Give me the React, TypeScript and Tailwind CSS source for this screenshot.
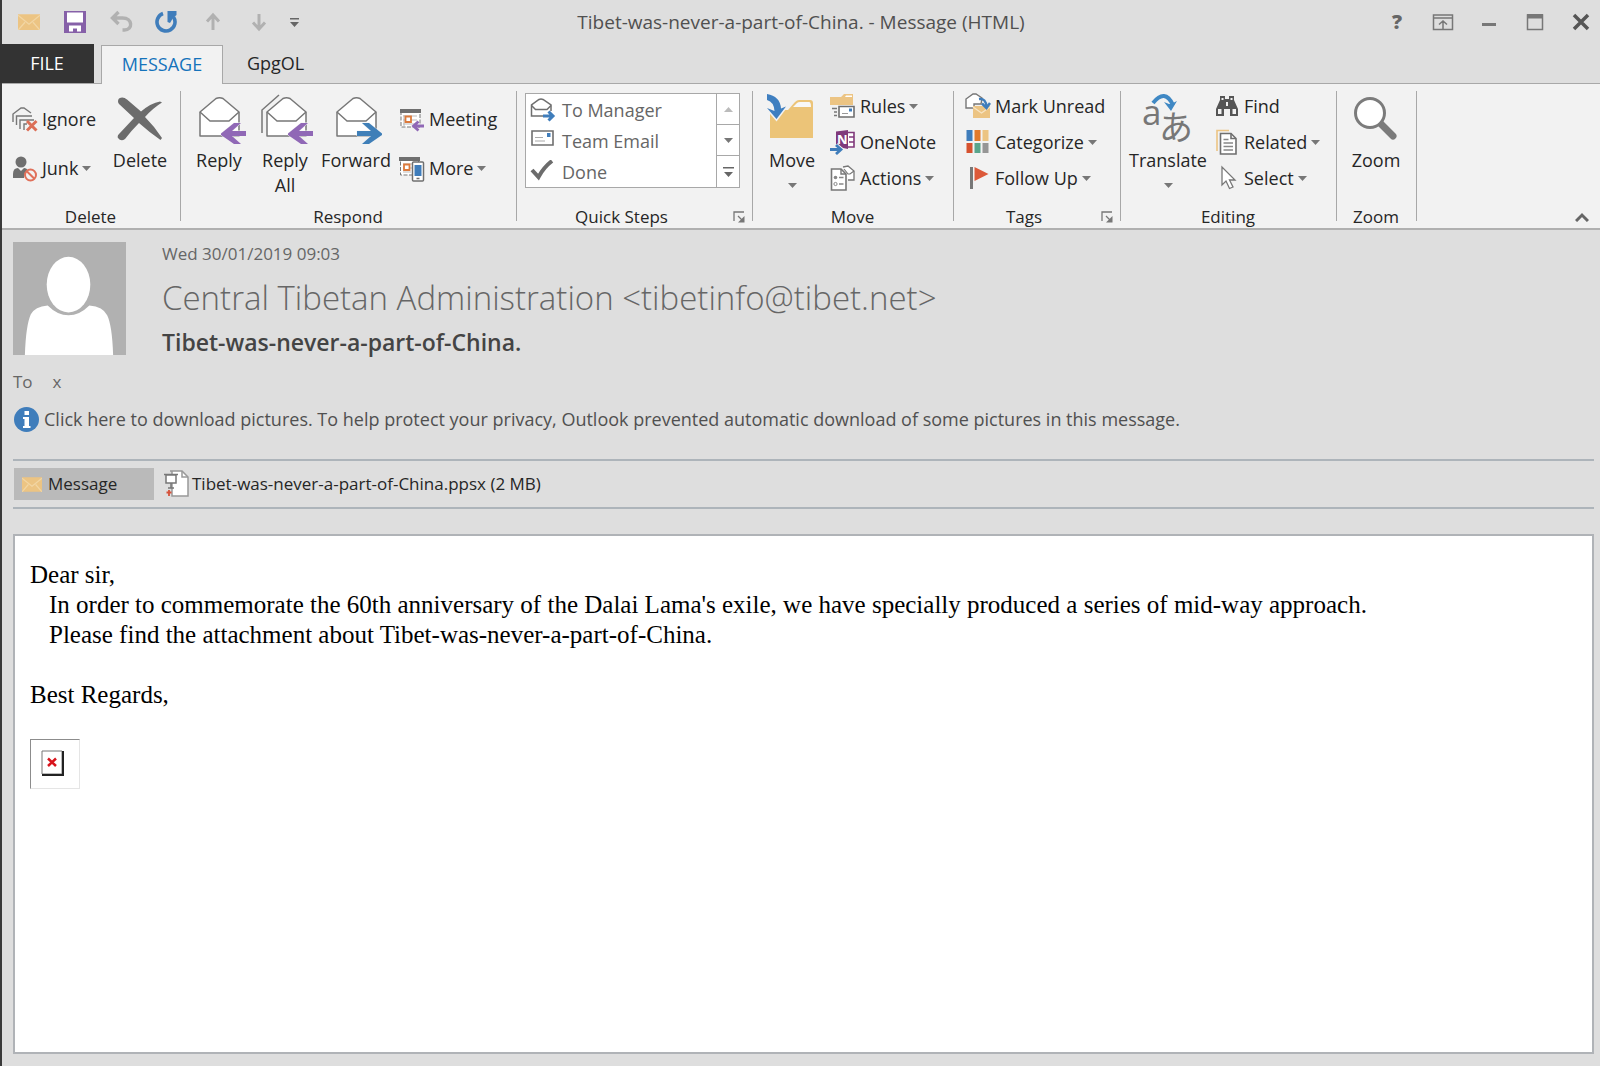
import type { ReactNode } from 'react'

const Caret = () => (
  <svg width="9" height="5" viewBox="0 0 9 5" className="shrink-0"><path d="M0 0h9L4.5 5z" fill="#777" /></svg>
)

const Envelope = ({ x = 0 }: { x?: number }) => (
  <g transform={`translate(${x} 0)`} stroke="#777" strokeWidth="1.5" strokeLinejoin="round">
    <path d="M1 15v24h39V15L24 1.500Q20.500 0 17 1.500z" fill="#fff" />
    <path d="M1 15l10 9h19l10-9" fill="none" />
  </g>
)

const ReplyArrow = () => (
  <path d="M22 36.500L35 26h7l-9 8h14v5H33l9 8h-7L22 38z" fill="#9068b6" stroke="#f2f2f2" strokeWidth="1" paintOrder="stroke" />
)

const MailIcon = ({ size = 22 }: { size?: number }) => (
  <svg width={size} height={size * 0.75} viewBox="0 0 22 16">
    <path d="M0 0h22v16H0z" fill="#ecc483" />
    <path d="M0 1l11 9L22 1M0 16l7-8M22 16l-7-8" fill="none" stroke="#f2d6a4" strokeWidth="1.300" />
  </svg>
)

const quickAccess = [
  { label: 'Mail', icon: <MailIcon /> },
  {
    label: 'Save',
    icon: (
      <svg width="24" height="24" viewBox="0 0 24 24">
        <path d="M1 1h22v22H1z" fill="#8660a8" />
        <path d="M4 2.500h16v10H4zM6 15.500h12v6h-4v-3h-4v3H6z" fill="#fff" />
      </svg>
    )
  },
  {
    label: 'Undo',
    icon: (
      <svg width="24" height="24" viewBox="0 0 24 24" fill="none" stroke="#b1b1b1" strokeWidth="3.400">
        <path d="M9.500 2L3.500 8l6 6M3.500 8h10c10.500 0 10.500 12 2 12h-2" />
      </svg>
    )
  },
  {
    label: 'Redo',
    icon: (
      <svg width="24" height="24" viewBox="0 0 24 24" fill="none" stroke="#3f7dbb" strokeWidth="3.600">
        <path d="M8 3.500A9 9 0 1 0 18.500 7" />
        <path d="M12 1h9.500v4L18 8l-3 5-2.500-1V1z" fill="#3f7dbb" stroke="none" />
      </svg>
    )
  },
  {
    label: 'Previous item',
    icon: (
      <svg width="20" height="20" viewBox="0 0 20 20" fill="none" stroke="#b1b1b1" strokeWidth="3">
        <path d="M10 18V4M4 9.500L10 3l6 6.500" />
      </svg>
    )
  },
  {
    label: 'Next item',
    icon: (
      <svg width="20" height="20" viewBox="0 0 20 20" fill="none" stroke="#b1b1b1" strokeWidth="3">
        <path d="M10 2v14M4 10.500l6 6.500 6-6.500" />
      </svg>
    )
  }
]

const windowButtons = [
  {
    label: 'Ribbon display options',
    icon: (
      <svg width="22" height="18" viewBox="0 0 22 18" fill="none" stroke="#777" strokeWidth="1.500">
        <path d="M1.500 2h19v14.500h-19zM1.500 5h19M11 16V8M7 11.500L11 8l4 3.500" />
      </svg>
    )
  },
  { label: 'Minimize', icon: <svg width="22" height="18" viewBox="0 0 22 18"><path d="M4 10h14v3H4z" fill="#777" /></svg> },
  {
    label: 'Maximize',
    icon: (
      <svg width="22" height="18" viewBox="0 0 22 18">
        <path d="M3.500 2h15v14.500h-15z" fill="none" stroke="#777" strokeWidth="1.500" />
        <path d="M3 1h16v4.500H3z" fill="#777" />
      </svg>
    )
  },
  {
    label: 'Close',
    icon: (
      <svg width="22" height="18" viewBox="0 0 22 18"><path d="M4 2l14 14M18 2L4 16" stroke="#555" strokeWidth="3.500" /></svg>
    )
  }
]

const icons = {
  ignore: (
    <svg width="26" height="26" viewBox="0 0 26 26" fill="none" stroke="#777" strokeWidth="1.400">
      <path d="M1 15V7l8-6 3 0 7 5M4.500 18V9H20M8 22v-9h14" />
      <path d="M12 23v-6h3" />
      <path d="M15 14l9.500 9.500M24.500 14L15 23.500" stroke="#dc6f57" strokeWidth="3" />
    </svg>
  ),
  junk: (
    <svg width="26" height="26" viewBox="0 0 26 26">
      <circle cx="9" cy="6" r="5.500" fill="#6f6f6f" />
      <path d="M1 22v-4q0-6 5-6l3 3 3-3q3 0 4 3-4 2-4 7z" fill="#6f6f6f" />
      <circle cx="18.500" cy="19" r="5.500" fill="#f2f2f2" stroke="#e0705a" strokeWidth="2" />
      <path d="M14.800 15.200l7.600 7.600" stroke="#e0705a" strokeWidth="2" />
    </svg>
  ),
  delete: (
    <svg width="46" height="44" viewBox="0 0 46 44" fill="#6c6c6c">
      <path d="M2 1.500q4-2.500 8 1l14 12Q34 6 43 4.500l2 1Q36 11 28 20 38 30 45 41l-1.500 2Q32 35 22 26 14 34 8 42q-4 3-7-1-1-2 1-4L17 21 2 7q-2-3 0-5.500z" />
    </svg>
  ),
  reply: <svg width="47" height="48" viewBox="0 0 47 48"><Envelope /><ReplyArrow /></svg>,
  replyAll: (
    <svg width="52" height="51" viewBox="0 -3 52 51">
      <path d="M1 36V13L18 -2" fill="none" stroke="#777" strokeWidth="1.500" />
      <Envelope x={5} />
      <g transform="translate(5 0)"><ReplyArrow /></g>
    </svg>
  ),
  forward: (
    <svg width="47" height="48" viewBox="0 0 47 48">
      <Envelope />
      <path d="M46 36.500L33 26h-7l9 8H21v5h14l-9 8h7L46 38z" fill="#3f7fb8" stroke="#f2f2f2" strokeWidth="1" paintOrder="stroke" />
    </svg>
  ),
  meeting: (
    <svg width="26" height="24" viewBox="0 0 26 24">
      <path d="M2 3h19v16H2z" fill="#fff" stroke="#777" strokeDasharray="4 1.500" />
      <path d="M1 1h21v4H1z" fill="#6f6f6f" />
      <path d="M4 8h14M4 12h14M4 16h14M5 7v11" stroke="#bbb" />
      <path d="M6.500 8.500H12V14H6.500z" fill="#fff" stroke="#dc7a3c" strokeWidth="1.800" />
      <path d="M25 18H15M19.500 13.500L14.500 18l5 4.500" fill="none" stroke="#9068b6" strokeWidth="2.800" />
    </svg>
  ),
  more: (
    <svg width="26" height="26" viewBox="0 0 26 26">
      <path d="M1.500 4h18v15h-18z" fill="#fff" stroke="#777" strokeDasharray="4 1.500" />
      <path d="M0 1h21v4H0z" fill="#6f6f6f" />
      <path d="M4 8h10M4 12h10M4 16h8" stroke="#bbb" />
      <path d="M5 8.500h5.500V14H5z" fill="#fff" stroke="#dc7a3c" strokeWidth="1.800" />
      <rect x="13.500" y="6" width="11" height="19" rx="1" fill="#fff" stroke="#6f6f6f" strokeWidth="1.500" />
      <path d="M15.500 9h7v11h-7z" fill="#3f7dbb" />
      <path d="M17.500 22.500h3" stroke="#6f6f6f" strokeWidth="1.500" />
    </svg>
  ),
  toManager: (
    <svg width="26" height="26" viewBox="0 0 26 26">
      <path d="M21 13V7L13 1.500Q11 .5 9 1.500L1.500 7v11H13" fill="none" stroke="#6f6f6f" strokeWidth="1.500" />
      <path d="M1.500 7.500l4 4H17l4-4" fill="none" stroke="#6f6f6f" strokeWidth="1.500" />
      <path d="M13 18h10M18.500 13.500l4.500 4.500-4.500 4.500" fill="none" stroke="#3f7dbb" strokeWidth="3" />
    </svg>
  ),
  teamEmail: (
    <svg width="26" height="26" viewBox="0 0 26 26">
      <path d="M2 2h21v14H2z" fill="#fff" stroke="#6f6f6f" strokeWidth="1.600" />
      <path d="M17 4h3.500v4H17z" fill="#3f7dbb" />
      <path d="M5 8.500h8M5 12h10" stroke="#aaa" strokeWidth="1.200" />
    </svg>
  ),
  done: (
    <svg width="26" height="26" viewBox="0 0 26 26"><path d="M2 10l6.500 7Q14 7 22 1" fill="none" stroke="#6c6c6c" strokeWidth="4" /></svg>
  ),
  move: (
    <svg width="48" height="48" viewBox="0 0 48 48">
      <path d="M4 16h18l7-8q2-2 4-2h11q3 0 3 3v35H4z" fill="#ecc478" />
      <path d="M27 13l4-4q1-1 3-1h9q2 0 2 5z" fill="#f8f8f8" />
      <path d="M1 14l9.500 11L20 12.500l-5 2Q14 2 1 0v6q7 2 7.500 11z" fill="#3f7fc0" stroke="#f2f2f2" strokeWidth="3" paintOrder="stroke" />
    </svg>
  ),
  rules: (
    <svg width="26" height="26" viewBox="0 0 26 26">
      <path d="M0 4h11l3-3h9v11H0z" fill="#ecc483" />
      <path d="M15 4l1-1.500h6V4z" fill="#fff" />
      <path d="M2 15.500h5M4 19h3M4 22.500h3" stroke="#777" strokeWidth="1.500" />
      <path d="M9 13.500h15V24H9z" fill="#fff" stroke="#6f6f6f" strokeWidth="1.600" />
      <path d="M19 15.500h3v3h-3z" fill="#3f7dbb" />
      <path d="M12 20.500h6" stroke="#999" />
    </svg>
  ),
  oneNote: (
    <svg width="26" height="26" viewBox="0 0 26 26">
      <path d="M17 3.500h7V18h-7" fill="#fff" stroke="#80397b" strokeWidth="1.600" />
      <path d="M19 8h5M19 13h5" stroke="#80397b" strokeWidth="1.400" />
      <path d="M6 2.500L18 1v19l-5-1-7-4z" fill="#80397b" />
      <text x="7" y="15" fontSize="13" fontWeight="700" fill="#fff" fontFamily="Open Sans">N</text>
      <path d="M0 20.500h10M6 16l5 4.500L6 25" fill="none" stroke="#f2f2f2" strokeWidth="4.500" />
      <path d="M0 20.500h9M6 16l5 4.500L6 25" fill="none" stroke="#3f7dbb" strokeWidth="2.800" />
    </svg>
  ),
  actions: (
    <svg width="26" height="26" viewBox="0 0 26 26">
      <path d="M13 2l5-1 6 5v9h-6" fill="#fff" stroke="#777" strokeWidth="1.300" />
      <path d="M14 4l4 5h2l4-3" fill="none" stroke="#777" strokeWidth="1.200" />
      <path d="M1.500 4H11l5 5v16H1.500z" fill="#fff" stroke="#777" strokeWidth="1.600" />
      <path d="M11 4v5h5" fill="none" stroke="#777" strokeWidth="1.400" />
      <circle cx="5.500" cy="12.500" r="1.800" fill="#888" />
      <circle cx="5.500" cy="19" r="1.600" fill="none" stroke="#888" />
      <path d="M9 12.500h4.500M9 19h4.500" stroke="#888" strokeWidth="1.300" />
    </svg>
  ),
  markUnread: (
    <svg width="26" height="26" viewBox="0 0 26 26">
      <path d="M1 15V6l7-5h3l6 4-1 6H9v4z" fill="#fff" stroke="#777" strokeWidth="1.400" />
      <path d="M8 13h17v12H8z" fill="#ecc483" />
      <path d="M8 14l8.500 6 8.500-6" fill="none" stroke="#f7e5c5" strokeWidth="1.300" />
      <path d="M14 6q7-1 7.500 8M17 10.500l4.500 4.500 3.500-5" fill="none" stroke="#3f7dbb" strokeWidth="2.500" />
    </svg>
  ),
  categorize: (
    <svg width="26" height="26" viewBox="0 0 26 26">
      <path d="M1.500 1h6v11h-6z" fill="#3f7dbb" />
      <path d="M9.500 1h6v11h-6z" fill="#e27a2b" />
      <path d="M17.500 1h6v11h-6z" fill="#ecc483" />
      <path d="M1.500 14h6v10h-6z" fill="#d6522f" />
      <path d="M9.500 14h6v10h-6z" fill="#5aa58c" />
      <path d="M17.500 14h6v10h-6z" fill="#969696" />
    </svg>
  ),
  followUp: (
    <svg width="26" height="26" viewBox="0 0 26 26">
      <path d="M5 2h3v22H5z" fill="#777" />
      <path d="M9.500 2l14 7-14 7z" fill="#dc5939" />
    </svg>
  ),
  translate: (
    <svg width="50" height="52" viewBox="0 0 50 52" className="overflow-visible">
      <text x="-1" y="31" fontSize="35" fill="#777" fontFamily="Open Sans">a</text>
      <text x="16" y="46" fontSize="34" fill="#777" fontFamily="Noto Sans CJK JP">あ</text>
      <path d="M10 9q12-15 20 2" fill="none" stroke="#3f88c4" strokeWidth="4" />
      <path d="M21 8l7 9 6-10-4 2-4 1z" fill="#3f88c4" />
    </svg>
  ),
  find: (
    <svg width="24" height="24" viewBox="0 0 24 24" fill="#555">
      <path d="M5 2h5v3h4V2h5v4l4 9v7h-8v-7H9v7H1v-7l4-9z" />
      <path d="M3 15h3.500v5H3zM17.500 15H21v5h-3.500zM6.500 4h2v2h-2zM15.500 4h2v2h-2zM11 8h2v4h-2z" fill="#f2f2f2" />
    </svg>
  ),
  related: (
    <svg width="24" height="26" viewBox="0 0 24 26">
      <path d="M14 1.500H2V22" fill="none" stroke="#ecc483" strokeWidth="1.600" />
      <path d="M5.500 4.500H16l5 5V25H5.500z" fill="#fff" stroke="#6f6f6f" strokeWidth="1.600" />
      <path d="M16 4.500v5h5" fill="none" stroke="#6f6f6f" strokeWidth="1.600" />
      <path d="M8.500 10.500h5M8.500 14h9.500M8.500 17.500h9.500M8.500 21h9.500" stroke="#888" strokeWidth="1.300" />
    </svg>
  ),
  select: (
    <svg width="24" height="26" viewBox="0 0 24 26">
      <path d="M7 2v18l4-4 3.500 7.500 3.500-1.500-3.500-7H20z" fill="#fff" stroke="#777" strokeWidth="1.300" />
    </svg>
  ),
  zoom: (
    <svg width="44" height="44" viewBox="0 0 44 44">
      <path d="M28 28l12 12" stroke="#7b7b7b" strokeWidth="7" strokeLinecap="round" />
      <circle cx="17" cy="17" r="14.500" fill="#fff" stroke="#7b7b7b" strokeWidth="3" />
    </svg>
  )
}

interface GroupProps {
  title: string
  className: string
  launcher?: boolean
  children: ReactNode
}

const Group = ({ title, className, launcher, children }: GroupProps) => (
  <>
    <section aria-label={title} className={`relative flex shrink-0 flex-col ${className}`}>
      <div className="flex flex-1 items-start">{children}</div>
      <h2 className={`pb-px text-center text-[17px] leading-5 ${launcher ? 'pr-[26px]' : 'pr-px'}`}>{title}</h2>
      {launcher && (
        <button aria-label={`${title} options`} className="absolute right-[7px] bottom-[5px]">
          <svg width="12" height="12" viewBox="0 0 12 12" fill="none" stroke="#777" strokeWidth="1.300">
            <path d="M1 10V1h10" />
            <path d="M5 5l5 5" />
            <path d="M11.500 5v6.500H5z" fill="#777" stroke="none" />
          </svg>
        </button>
      )}
    </section>
    <div className="my-[7px] w-px shrink-0 bg-[#a8a8a8]" />
  </>
)

const LargeButton = ({ icon, label, className, caret }: { icon: ReactNode; label: string; className: string; caret?: boolean }) => (
  <button className={`flex shrink-0 flex-col items-center pt-[10px] leading-[25px] ${className}`}>
    <span className="flex h-[54px] items-start justify-center">{icon}</span>
    <span>{label}</span>
    {caret && <span className="flex h-6 items-center"><Caret /></span>}
  </button>
)

const SmallButton = ({ icon, label, caret, className = 'h-9 gap-1' }: { icon: ReactNode; label: string; caret?: boolean; className?: string }) => (
  <button className={`flex items-center whitespace-nowrap ${className}`}>
    <span className="flex w-[26px] shrink-0 justify-center">{icon}</span>
    <span>{label}</span>
    {caret && <Caret />}
  </button>
)

const quickSteps = [
  { label: 'To Manager', icon: icons.toManager },
  { label: 'Team Email', icon: icons.teamEmail },
  { label: 'Done', icon: icons.done }
]

const TitleBar = () => (
  <header className="grid h-11 grid-cols-[1fr_auto_1fr] items-center">
    <div className="flex items-center pl-1">
      {quickAccess.map((item) => (
        <button key={item.label} aria-label={item.label} className="flex w-[46px] justify-center">
          {item.icon}
        </button>
      ))}
      <button aria-label="Customize toolbar" className="flex w-6 justify-center">
        <svg width="9" height="9" viewBox="0 0 9 9" fill="#666"><path d="M0 0h9v1.500H0zM0 4h9L4.500 9z" /></svg>
      </button>
    </div>
    <h1 className="text-[19px] text-[#505050]">Tibet-was-never-a-part-of-China. - Message (HTML)</h1>
    <div className="flex items-center justify-end gap-6 pr-2">
      <button aria-label="Help" className="w-[22px] text-[20px] leading-6 font-extrabold text-[#666]">?</button>
      {windowButtons.map((item) => (
        <button key={item.label} aria-label={item.label}>{item.icon}</button>
      ))}
    </div>
  </header>
)

const Tabs = () => (
  <nav className="flex h-10 items-stretch border-b border-[#a8a8a8] text-[18px]">
    <button className="-ml-0.5 w-[94px] bg-[#333] text-white">FILE</button>
    <button className="relative top-px ml-[7px] w-[122px] border border-b-0 border-[#a8a8a8] bg-[#f2f2f2] pb-px text-[#1573bb]">
      MESSAGE
    </button>
    <button className="px-6">GpgOL</button>
  </nav>
)

const Ribbon = () => (
  <div className="flex h-[146px] border-b-2 border-[#b0b0b0] bg-[#f2f2f2] text-[18px]">
    <Group title="Delete" className="w-[178px]">
      <div className="w-[105px] pt-[11px] pl-[10px]">
        <SmallButton icon={icons.ignore} label="Ignore" className="h-[49px] gap-1" />
        <SmallButton icon={icons.junk} label="Junk" className="h-[49px] gap-1" caret />
      </div>
      <LargeButton icon={<span className="pt-[3px]">{icons.delete}</span>} label="Delete" className="w-[66px]" />
    </Group>
    <Group title="Respond" className="w-[335px]">
      <LargeButton icon={<span className="pt-[3px] pl-1.5">{icons.reply}</span>} label="Reply" className="ml-[5px] w-[66px]" />
      <LargeButton icon={<span className="pl-1">{icons.replyAll}</span>} label="Reply All" className="w-[66px]" />
      <LargeButton icon={<span className="pt-[3px] pl-1.5">{icons.forward}</span>} label="Forward" className="w-[76px]" />
      <div className="pt-[11px] pl-[5px]">
        <SmallButton icon={icons.meeting} label="Meeting" className="h-[49px] gap-1" />
        <SmallButton icon={icons.more} label="More" className="h-[49px] gap-1" caret />
      </div>
    </Group>
    <Group title="Quick Steps" className="w-[235px]" launcher>
      <div className="mt-[9px] ml-2 flex h-[95px] w-[215px] border border-[#a8a8a8] bg-white text-[#666]">
        <div className="flex-1 pt-px pl-1">
          {quickSteps.map((step) => (
            <SmallButton key={step.label} icon={step.icon} label={step.label} className="h-[31px] gap-1.5" />
          ))}
        </div>
        <div className="grid w-[23px] grid-rows-3 divide-y divide-[#a8a8a8] border-l border-[#a8a8a8]">
          <button aria-label="Scroll up" className="flex items-center justify-center">
            <svg width="9" height="5" viewBox="0 0 9 5"><path d="M0 5h9L4.500 0z" fill="#bbb" /></svg>
          </button>
          <button aria-label="Scroll down" className="flex items-center justify-center"><Caret /></button>
          <button aria-label="All quick steps" className="flex items-center justify-center">
            <svg width="11" height="10" viewBox="0 0 11 10" fill="#666"><path d="M0 0h11v1.500H0zM1 5h9L5.500 10z" /></svg>
          </button>
        </div>
      </div>
    </Group>
    <Group title="Move" className="w-[200px]">
      <LargeButton icon={<span className="pr-1">{icons.move}</span>} label="Move" className="ml-[5px] w-[68px]" caret />
      <div className="pt-1 pl-1">
        <SmallButton icon={icons.rules} label="Rules" caret />
        <SmallButton icon={icons.oneNote} label="OneNote" />
        <SmallButton icon={icons.actions} label="Actions" caret />
      </div>
    </Group>
    <Group title="Tags" className="w-[166px]" launcher>
      <div className="pt-1 pl-[11px]">
        <SmallButton icon={icons.markUnread} label="Mark Unread" />
        <SmallButton icon={icons.categorize} label="Categorize" caret />
        <SmallButton icon={icons.followUp} label="Follow Up" caret />
      </div>
    </Group>
    <Group title="Editing" className="w-[215px]">
      <LargeButton icon={icons.translate} label="Translate" className="ml-[5px] w-[84px]" caret />
      <div className="pt-1 pl-1">
        <SmallButton icon={icons.find} label="Find" />
        <SmallButton icon={icons.related} label="Related" caret />
        <SmallButton icon={icons.select} label="Select" caret />
      </div>
    </Group>
    <Group title="Zoom" className="w-[79px]">
      <LargeButton icon={<span className="pt-0.5 pr-0.5">{icons.zoom}</span>} label="Zoom" className="w-[78px]" />
    </Group>
    <button aria-label="Collapse ribbon" className="mr-[11px] mb-1.5 ml-auto self-end">
      <svg width="14" height="10" viewBox="0 0 14 10"><path d="M1 9l6-6 6 6" fill="none" stroke="#666" strokeWidth="3" /></svg>
    </button>
  </div>
)

const MessageHeader = () => (
  <div className="text-[17px] text-[#666]">
    <div className="flex gap-9 pt-3">
      <svg width="113" height="113" viewBox="0 0 114 114" role="img" aria-label="Sender">
        <path d="M0 0h114v114H0z" fill="#b1b1b1" />
        <ellipse cx="56" cy="43" rx="22" ry="28" fill="#fff" />
        <path d="M12 114q1-30 6-41 4-8 17-9 10 10 21 10t21-10q14 1 18 10 5 10 6 40z" fill="#fff" />
      </svg>
      <div>
        <p className="leading-6">Wed 30/01/2019 09:03</p>
        <p className="mt-2 text-[33px] leading-[48px] font-light">Central Tibetan Administration &lt;tibetinfo@tibet.net&gt;</p>
        <p className="mt-1 text-[23px] leading-8 font-semibold text-[#444]">Tibet-was-never-a-part-of-China.</p>
      </div>
    </div>
    <p className="flex gap-5 pt-3 leading-6"><span>To</span><span>x</span></p>
    <button className="mt-[9px] flex items-center gap-1 text-[18px] leading-8 text-[#505050]">
      <svg width="27" height="27" viewBox="0 0 27 27">
        <circle cx="13.500" cy="13.500" r="12.500" fill="#3f7dbb" />
        <path d="M11.500 5h4.500v4h-4.500zM10 11h6v9h1.500v2H10v-2h1.500v-7H10z" fill="#fff" />
      </svg>
      Click here to download pictures. To help protect your privacy, Outlook prevented automatic download of some pictures in this message.
    </button>
  </div>
)

const Attachments = () => (
  <div className="mt-6 flex h-[50px] items-center gap-2 border-y-2 border-[#adb4ba] text-[17px]">
    <button className="ml-px flex h-8 w-[140px] items-center gap-1.5 bg-[#bababa] pl-2">
      <MailIcon size={20} />
      Message
    </button>
    <a href="#attachment" className="flex items-center gap-0.5 pl-0.5">
      <svg width="26" height="28" viewBox="0 0 26 28">
        <path d="M6 1h12l6 6v19H8V1z" fill="#fff" stroke="#999" strokeWidth="1.500" />
        <path d="M18 1v6h6" fill="none" stroke="#999" strokeWidth="1.500" />
        <path d="M2 5h10v8H2zM0 4.500h14M7 13v5M4 18h6" fill="#fff" stroke="#777" strokeWidth="1.500" />
        <path d="M5 20v6M2.500 22.500h5" stroke="#d6523a" strokeWidth="1.800" />
      </svg>
      Tibet-was-never-a-part-of-China.ppsx (2 MB)
    </a>
  </div>
)

const MessageBody = () => (
  <main className="mt-[25px] mb-3 flex-1 border-2 border-[#b0b3b7] bg-white px-[15px] pt-6 font-['Liberation_Serif',serif] text-[25px] leading-[30px] text-black">
    <p>Dear sir,</p>
    <p className="pl-[19px]">In order to commemorate the 60th anniversary of the Dalai Lama's exile, we have specially produced a series of mid-way approach.</p>
    <p className="pl-[19px]">Please find the attachment about Tibet-was-never-a-part-of-China.</p>
    <p className="mt-[30px]">Best Regards,</p>
    <div className="mt-[29px] flex h-[50px] w-[50px] border border-[#e5e5e5] border-t-[#8c8c8c] border-l-[#8c8c8c] pt-2.5 pl-2.5">
      <svg width="24" height="26" viewBox="0 0 24 26" role="img" aria-label="Picture not downloaded">
        <path d="M1 1h20v23H1z" fill="#fff" stroke="#777" />
        <path d="M22 1v24H1" fill="none" stroke="#222" strokeWidth="2" />
        <path d="M7 8.500l8 7.500M15 8.500L7 16" stroke="#d8141c" strokeWidth="2.500" />
      </svg>
    </div>
  </main>
)

const App = () => (
  <div className="flex min-h-screen flex-col border-l-2 border-[#3a3a3a] bg-[#dedede] font-['Open_Sans',sans-serif] text-[#262626]">
    <TitleBar />
    <Tabs />
    <Ribbon />
    <div className="flex flex-1 flex-col pr-[6px] pl-[11px]">
      <MessageHeader />
      <Attachments />
      <MessageBody />
    </div>
  </div>
)

export default App
